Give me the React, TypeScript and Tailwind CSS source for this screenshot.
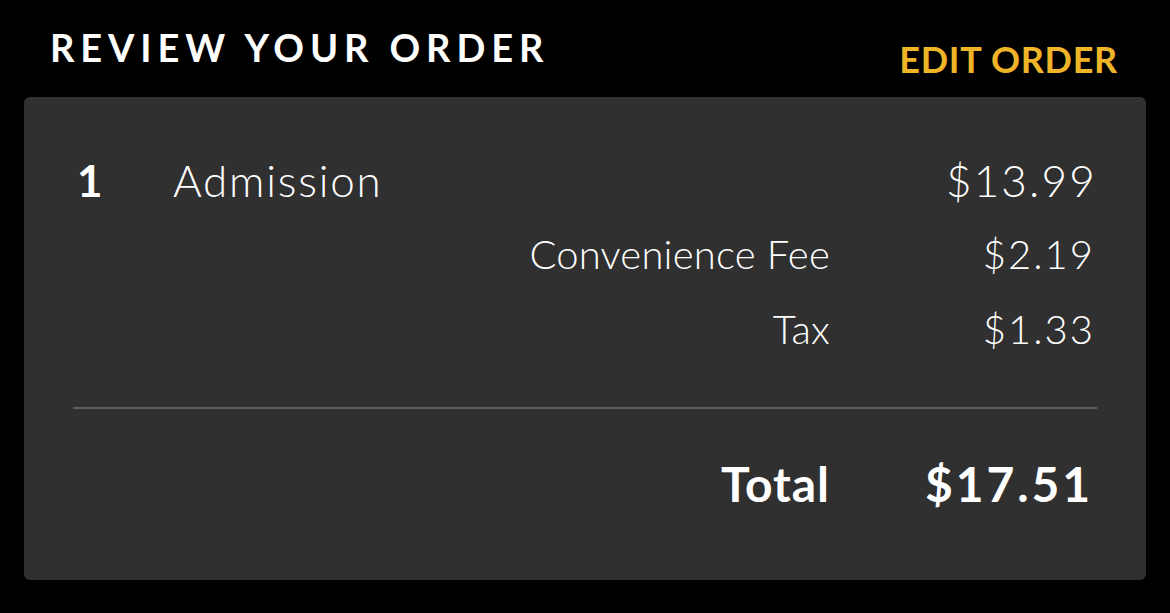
const lines = [
  { label: "Convenience Fee", amount: "$2.19" },
  { label: "Tax", amount: "$1.33" },
];

export default function App() {
  return (
    <div
      className="min-h-[613px] w-full bg-black text-white"
      style={{ fontFamily: "Lato, 'Noto Sans', sans-serif" }}
    >
      {/* Header */}
      <div className="flex h-[97px] items-start justify-between pl-[50px] pr-[52px] pt-[28px]">
        <h1 className="text-[38px] font-bold leading-[38px] tracking-[0.155em]">
          REVIEW YOUR ORDER
        </h1>
        <button className="mt-[13px] text-[36px] font-bold leading-[36px] tracking-[0.02em] text-[#f0b429]">
          EDIT ORDER
        </button>
      </div>

      {/* Order card */}
      <div className="mx-[24px] rounded-[6px] bg-[#303030] px-[49px] pb-[72px] pt-[61px]">
        <div className="flex h-[44px] items-center text-[44px] leading-[44px]">
          <span className="w-[100px] pl-[4px] font-bold">1</span>
          <span className="flex-1 font-light tracking-[0.04em]">Admission</span>
          <span className="font-light tracking-[0.05em]">$13.99</span>
        </div>

        <div className="mt-[30px] flex flex-col gap-[31px]">
          {lines.map((l) => (
            <div key={l.label} className="flex h-[44px] justify-end text-[40px] font-light leading-[44px] tracking-[0.005em]">
              <span>{l.label}</span>
              <span className="w-[267px] pr-[2px] text-right tracking-[0.05em]">{l.amount}</span>
            </div>
          ))}
        </div>

        <div className="mt-[56px] h-[2px] bg-[#5f5f5f]" />

        <div className="mt-[51px] flex h-[48px] justify-end text-[48px] font-bold leading-[48px]">
          <span className="tracking-[0.02em]">Total</span>
          <span className="w-[267px] pr-[4px] text-right tracking-[0.06em]">$17.51</span>
        </div>
      </div>
    </div>
  );
}
